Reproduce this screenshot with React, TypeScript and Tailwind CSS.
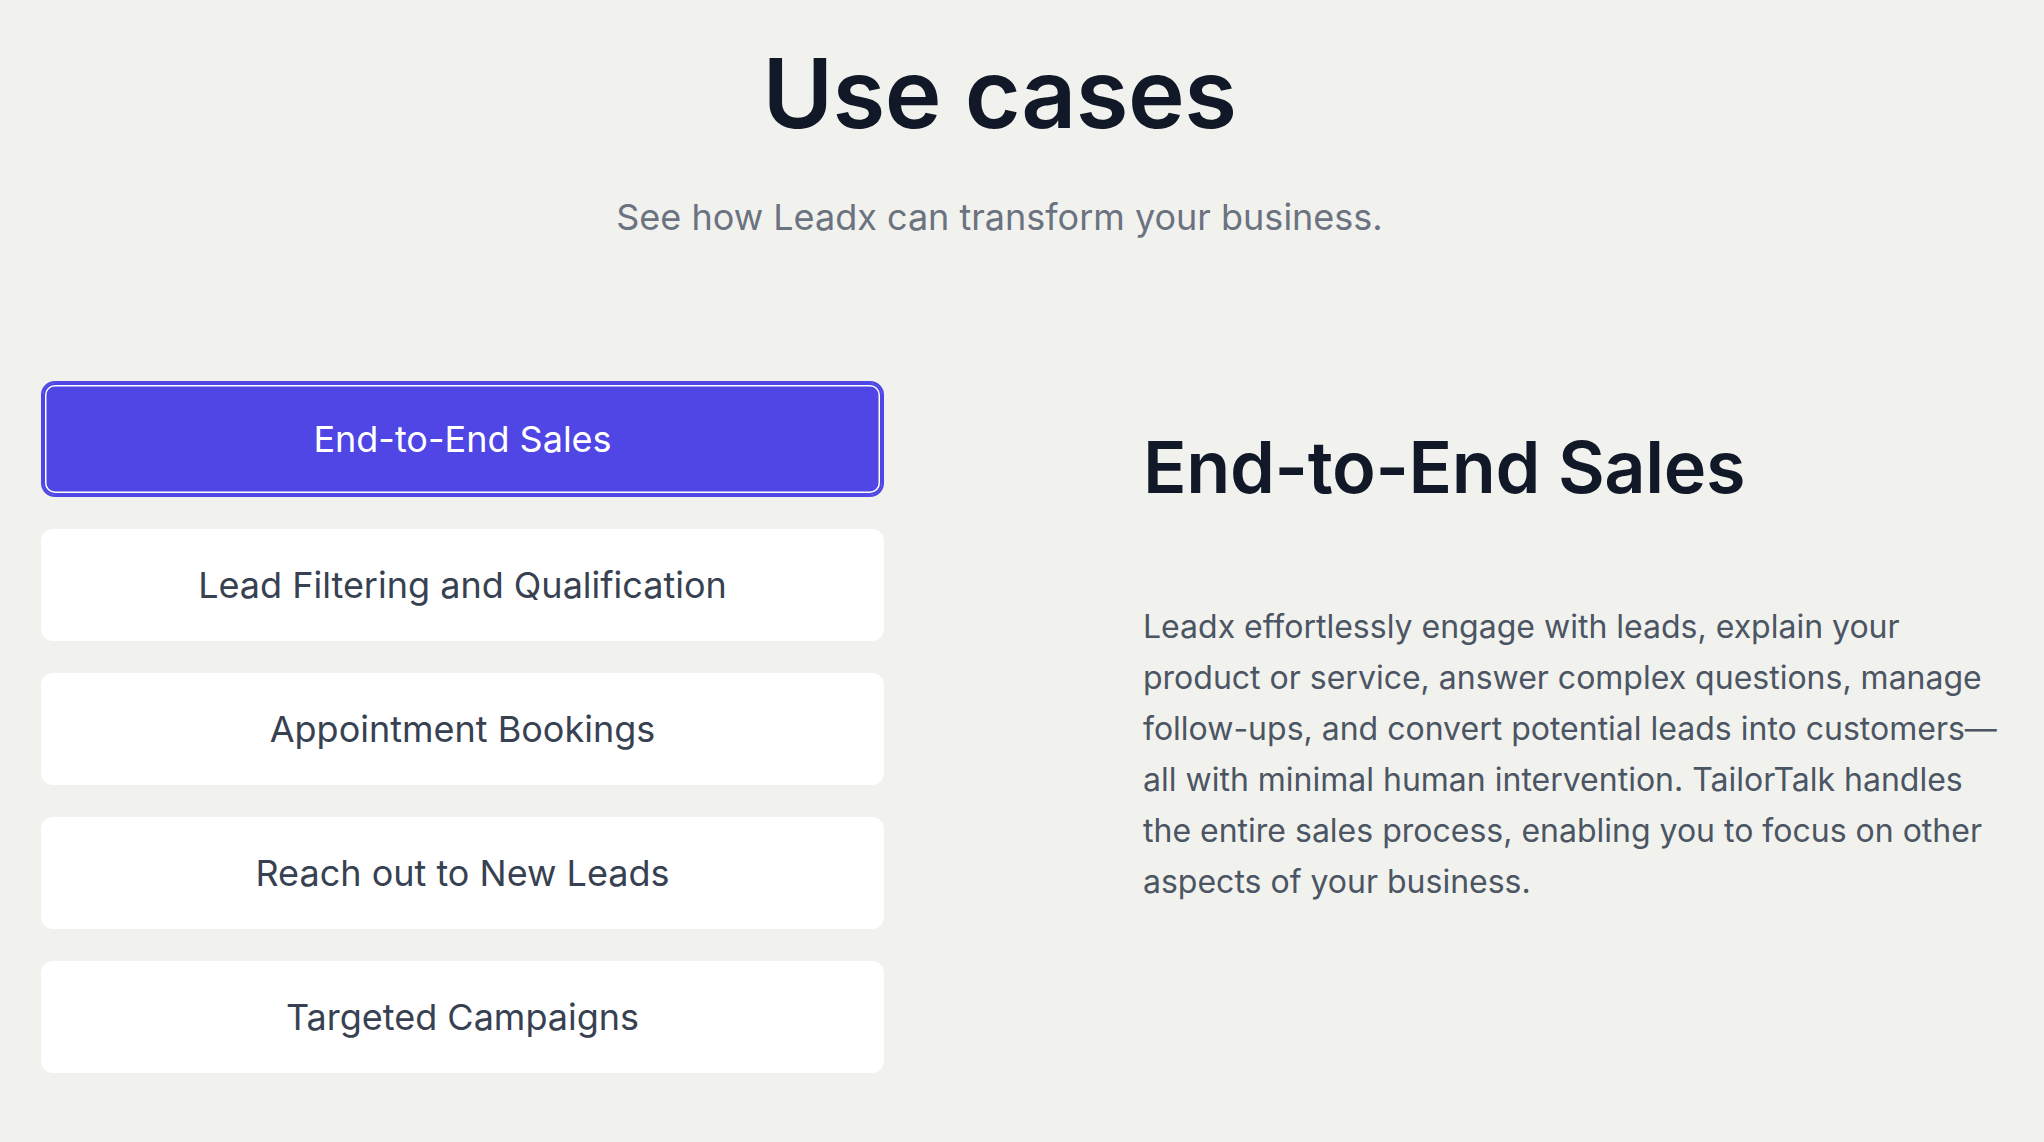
import * as React from "react";

const useCases = [
  {
    title: "End-to-End Sales",
    body: "Leadx effortlessly engage with leads, explain your product or service, answer complex questions, manage follow-ups, and convert potential leads into customers—all with minimal human intervention. TailorTalk handles the entire sales process, enabling you to focus on other aspects of your business.",
  },
  {
    title: "Lead Filtering and Qualification",
    body: "Leadx qualifies every inbound lead, asks the right questions and passes only the promising ones to your team.",
  },
  {
    title: "Appointment Bookings",
    body: "Leadx books meetings straight into your calendar, handles reschedules and sends reminders.",
  },
  {
    title: "Reach out to New Leads",
    body: "Leadx reaches out to new leads the moment they come in, so no opportunity goes cold.",
  },
  {
    title: "Targeted Campaigns",
    body: "Leadx runs personalised campaigns that speak to each segment of your audience.",
  },
];

export default function App() {
  const [active, setActive] = React.useState(0);
  const current = useCases[active];

  return (
    <div
      className="min-h-screen bg-[#f1f1ed] px-[41px] pt-[45px] pb-[69px]"
      style={{ fontFamily: "Inter, 'Noto Sans', sans-serif" }}
    >
      {/* Header */}
      <div className="flex flex-col items-center pr-[45px]">
        <h1 className="text-[96px] leading-none font-semibold text-[#111827] tracking-[-0.005em]">
          Use cases
        </h1>
        <p className="mt-[56px] text-[36px] leading-[40px] text-[#6b7280]">
          See how Leadx can transform your business.
        </p>
      </div>

      {/* Tabs + content */}
      <div className="mt-[144px] flex">
        <div className="flex w-[843px] shrink-0 flex-col gap-[32px]">
          {useCases.map((item, i) =>
            i === active ? (
              <button
                key={item.title}
                onClick={() => setActive(i)}
                className="flex h-[116px] items-center justify-center rounded-[14px] border-2 border-[#4f46e5] bg-[#4f46e5] text-[36px] text-white shadow-[inset_0_0_0_2px_#4f46e5,inset_0_0_0_3.5px_#ffffff]"
              >
                {item.title}
              </button>
            ) : (
              <button
                key={item.title}
                onClick={() => setActive(i)}
                className="flex h-[112px] items-center justify-center rounded-[12px] bg-white text-[36px] text-[#374151]"
              >
                {item.title}
              </button>
            )
          )}
        </div>

        <div className="ml-[259px] flex-1 pt-[50px]">
          <h2 className="text-[72px] leading-none font-semibold text-[#111827] tracking-[-0.005em]">
            {current.title}
          </h2>
          <p className="mt-[98px] text-[32px] leading-[51px] text-[#4b5563]">
            {current.body}
          </p>
        </div>
      </div>
    </div>
  );
}
